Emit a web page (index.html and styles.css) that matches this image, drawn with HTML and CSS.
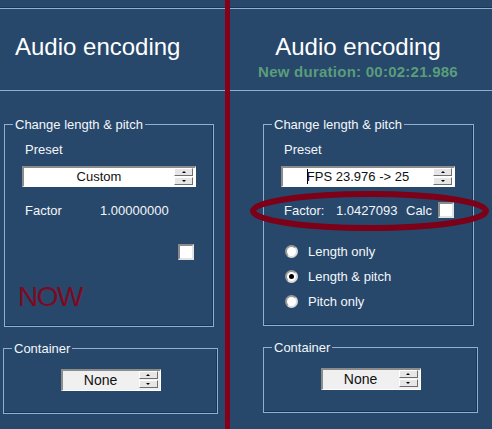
FILE: index.html
```html
<!DOCTYPE html>
<html>
<head>
<meta charset="utf-8">
<link rel="stylesheet" href="styles.css">
</head>
<body>
  <div class="panel panel-left">
    <div class="rule"></div>
    <header class="head head-left">
      <h1 class="title">Audio encoding</h1>
    </header>
    <fieldset class="group group-len-left">
      <legend class="legend">Change length &amp; pitch</legend>
      <div class="label preset">Preset</div>
      <div class="combo combo-preset">
        <span class="combo-text">Custom</span>
        <span class="spin"><span class="spin-btn up"></span><span class="spin-btn down"></span></span>
      </div>
      <div class="factor-row">
        <span class="factor-name">Factor</span>
        <span class="factor-value">1.00000000</span>
      </div>
      <div class="check check-left"></div>
      <div class="now">NOW</div>
    </fieldset>
    <fieldset class="group group-cont-left">
      <legend class="legend">Container</legend>
      <div class="combo combo-cont">
        <span class="combo-text">None</span>
        <span class="spin"><span class="spin-btn up"></span><span class="spin-btn down"></span></span>
      </div>
    </fieldset>
  </div>
  <div class="divider"></div>
  <div class="panel panel-right">
    <div class="rule"></div>
    <header class="head head-right">
      <h1 class="title">Audio encoding</h1>
      <div class="duration">New duration: 00:02:21.986</div>
    </header>
    <fieldset class="group group-len-right">
      <legend class="legend">Change length &amp; pitch</legend>
      <div class="label preset">Preset</div>
      <div class="combo combo-preset combo-right">
        <span class="combo-text"><span class="caret"></span>FPS 23.976 -&gt; 25</span>
        <span class="spin"><span class="spin-btn up"></span><span class="spin-btn down"></span></span>
      </div>
      <div class="factor-row factor-row-right">
        <span class="factor-name-r">Factor:</span>
        <span class="factor-value-r">1.0427093</span>
        <span class="calc">Calc</span>
        <span class="check check-calc"></span>
      </div>
      <div class="radios">
        <div class="radio-row"><span class="radio"></span><span class="radio-label">Length only</span></div>
        <div class="radio-row"><span class="radio checked"></span><span class="radio-label">Length &amp; pitch</span></div>
        <div class="radio-row"><span class="radio"></span><span class="radio-label">Pitch only</span></div>
      </div>
    </fieldset>
    <fieldset class="group group-cont-right">
      <legend class="legend">Container</legend>
      <div class="combo combo-cont">
        <span class="combo-text">None</span>
        <span class="spin"><span class="spin-btn up"></span><span class="spin-btn down"></span></span>
      </div>
    </fieldset>
    <svg class="mark" width="239" height="40" viewBox="0 0 239 40">
      <ellipse cx="119.5" cy="20" rx="116.5" ry="17" fill="none" stroke="#7c0018" stroke-width="6"/>
    </svg>
  </div>
</body>
</html>
```

FILE: styles.css
```css
html, body {
  margin: 0;
  padding: 0;
}
body {
  width: 492px;
  height: 429px;
  overflow: hidden;
  background: #27486b;
  display: flex;
  font-family: "Liberation Sans", Arial, sans-serif;
  font-size: 13px;
  line-height: 15px;
  color: #f4f6fa;
}
.panel {
  display: flex;
  flex-direction: column;
}
.panel-left {
  width: 225px;
}
.panel-right {
  width: 262px;
  position: relative;
}
.divider {
  width: 5px;
  background: #860019;
}
.rule {
  margin-top: 7px;
  height: 0;
  border-top: 1px solid #1b3452;
  border-bottom: 1px solid #8fb0d4;
}
.head {
  height: 81px;
  border-bottom: 1px solid #8fb0d4;
}
.title {
  margin: 0;
  padding-top: 24px;
  font-size: 24px;
  line-height: 28px;
  font-weight: normal;
  color: #ffffff;
}
.head-left .title {
  padding-left: 15px;
}
.head-right {
  text-align: center;
  padding-right: 6px;
}
.duration {
  margin-top: 2px;
  font-size: 15px;
  line-height: 17px;
  font-weight: bold;
  letter-spacing: 0.25px;
  color: #5a9d7b;
}
.group {
  box-sizing: border-box;
  min-width: 0;
  margin: 0;
  padding: 0;
  border: 1px solid #8fb0d4;
  box-shadow: inset -1px -1px 0 #1b3452;
}
.legend {
  padding: 0 2px;
  margin-left: 8px;
  font-size: 13px;
  line-height: 15px;
}
.group-len-left {
  margin: 26px 0 0 4px;
  width: 210px;
  padding-bottom: 13px;
}
.group-len-right {
  margin: 26px 0 0 33px;
  width: 211px;
  padding-bottom: 11px;
}
.group-cont-left {
  margin: 14px 0 0 3px;
  width: 215px;
  padding-bottom: 22px;
}
.group-cont-right {
  margin: 14px 0 0 33px;
  width: 215px;
  padding-bottom: 22px;
}
.label.preset {
  margin: 10px 0 0 20px;
}
.combo {
  box-sizing: border-box;
  display: flex;
  align-items: stretch;
  background: #ffffff;
  border-top: 2px solid #8c8c8c;
  border-left: 2px solid #8c8c8c;
  border-right: 1px solid #ffffff;
  border-bottom: 1px solid #ffffff;
  color: #111111;
}
.combo-preset {
  margin: 9px 0 0 17px;
  width: 174px;
  height: 21px;
}
.combo-cont {
  margin: 13px auto 0;
  width: 100px;
  height: 22px;
  background: #f0f0f0;
  font-size: 14px;
}
.combo-text {
  flex: 1;
  text-align: center;
  line-height: 18px;
  white-space: nowrap;
}
.combo-cont .combo-text {
  line-height: 19px;
}
.caret {
  display: inline-block;
  width: 1px;
  height: 15px;
  background: #000;
  vertical-align: -3px;
  margin-right: -1px;
}
.spin {
  width: 19px;
  display: flex;
  flex-direction: column;
  gap: 1px;
  margin-right: 2px;
}
.spin-btn {
  box-sizing: border-box;
  height: 8px;
  background: #e6e6e6;
  border-top: 1px solid #ffffff;
  border-left: 1px solid #ffffff;
  border-right: 1px solid #6e6e6e;
  border-bottom: 1px solid #6e6e6e;
  display: flex;
  align-items: center;
  justify-content: center;
}
.spin-btn::before {
  content: "";
  width: 0;
  height: 0;
  border-left: 2px solid transparent;
  border-right: 2px solid transparent;
}
.spin-btn.up::before {
  border-bottom: 2px solid #000;
}
.spin-btn.down::before {
  border-top: 2px solid #000;
}
.factor-row {
  display: flex;
  align-items: center;
  margin: 15px 0 0 20px;
  height: 16px;
}
.factor-name {
  width: 75px;
}
.factor-name-r {
  width: 52px;
}
.factor-value-r {
  width: 70px;
}
.calc {
  width: 32px;
}
.check {
  box-sizing: border-box;
  width: 16px;
  height: 16px;
  background: #ffffff;
  border-top: 2px solid #8a8a8a;
  border-left: 2px solid #8a8a8a;
  border-right: 2px solid #e2e2e2;
  border-bottom: 2px solid #e2e2e2;
}
.check-left {
  margin: 26px 0 0 173px;
}
.check-calc {
  display: block;
  flex: none;
}
.now {
  margin: 21px 0 0 13px;
  font-size: 28px;
  line-height: 32px;
  letter-spacing: -1.5px;
  color: #7e0a22;
}
.radios {
  margin: 21px 0 0 21px;
  display: flex;
  flex-direction: column;
}
.radio-row {
  height: 25px;
  display: flex;
  align-items: center;
  gap: 10px;
}
.radio {
  box-sizing: border-box;
  width: 13px;
  height: 13px;
  border-radius: 50%;
  background: #ffffff;
  border: 2px solid #9a9a9a;
  border-right-color: #dcdcdc;
  border-bottom-color: #dcdcdc;
  display: flex;
  align-items: center;
  justify-content: center;
}
.radio.checked::before {
  content: "";
  width: 5px;
  height: 5px;
  border-radius: 50%;
  background: #000;
}
.mark {
  position: absolute;
  left: 20px;
  top: 191px;
}
```
